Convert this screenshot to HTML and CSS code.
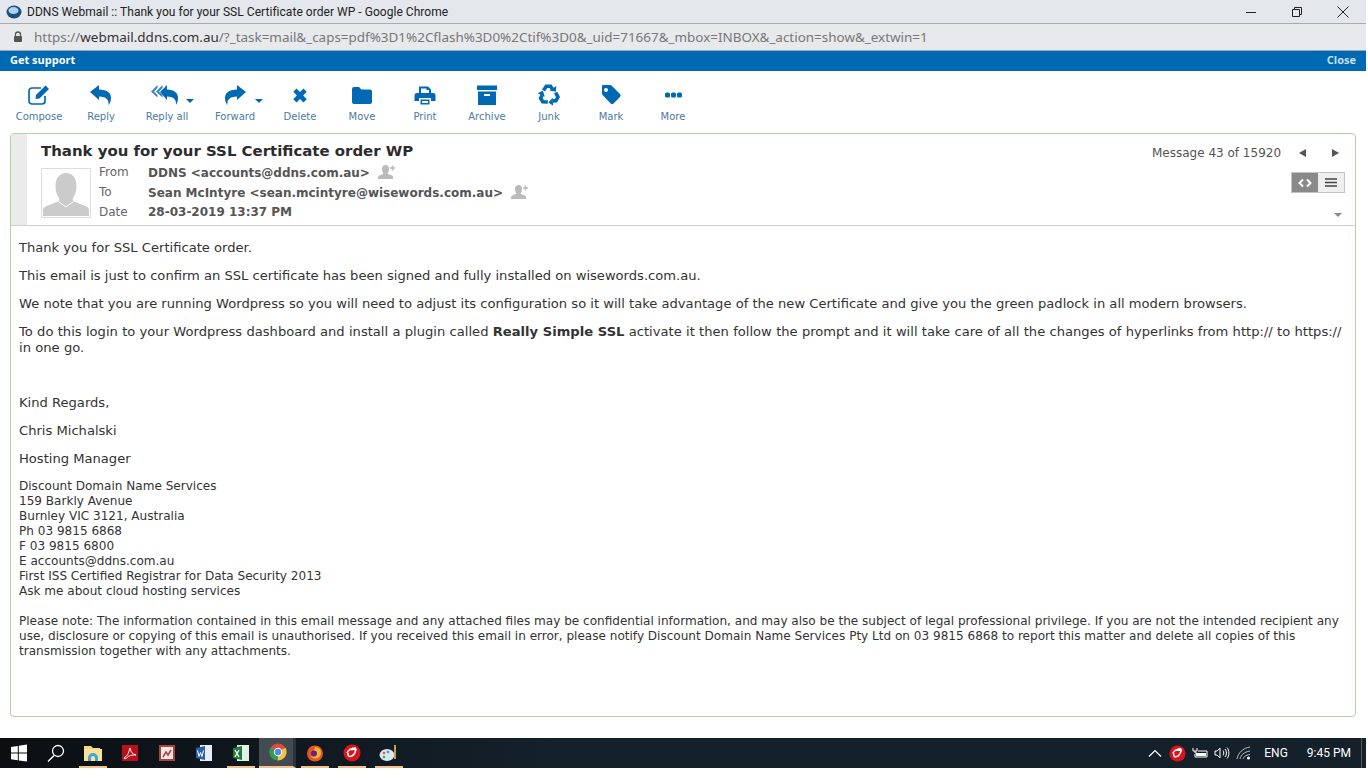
FILE: index.html
```html
<!DOCTYPE html>
<html lang="en">
<head>
  <meta charset="UTF-8">
  <title>DDNS Webmail :: Thank you for your SSL Certificate order WP</title>
  <link rel="stylesheet" href="styles.css">
</head>
<body>
<div class="screen">
  <div class="titlebar">
    <svg class="app-icon" width="16" height="16" viewBox="0 0 16 16"><ellipse cx="8" cy="8" rx="7.5" ry="6.5" fill="#1d4f7c"/><ellipse cx="7.5" cy="6.5" rx="5" ry="3.6" fill="#a9d3ee"/></svg>
    <span class="title-text">DDNS Webmail :: Thank you for your SSL Certificate order WP - Google Chrome</span>
    <div class="win-buttons">
      <svg width="12" height="12" viewBox="0 0 12 12"><path d="M1 6.500h10" stroke="#222" fill="none"/></svg>
      <svg width="12" height="12" viewBox="0 0 12 12"><path d="M1.500 3.500h7v7h-7zM3.500 3.500v-2h7v7h-2" stroke="#222" fill="none"/></svg>
      <svg width="12" height="12" viewBox="0 0 12 12"><path d="M.5.5l11 11M11.500.5l-11 11" stroke="#222" fill="none"/></svg>
    </div>
  </div>
  <div class="addressbar">
    <svg width="10" height="12" viewBox="0 0 10 12"><path d="M2.500 5V3.500a2.500 2.500 0 0 1 5 0V5" stroke="#555" stroke-width="1.300" fill="none"/><rect x="1" y="5" width="8" height="6" rx="1" fill="#555"/></svg>
    <span class="url"><span class="url-dim">https://</span>webmail.ddns.com.au<span class="url-dim">/?_task=mail&amp;_caps=pdf%3D1%2Cflash%3D0%2Ctif%3D0&amp;_uid=71667&amp;_mbox=INBOX&amp;_action=show&amp;_extwin=1</span></span>
  </div>
  <div class="supportbar"><a>Get support</a><a class="close-link">Close</a></div>

  <div class="toolbar">
    <div class="tool tool-compose"><svg width="24" height="22" viewBox="0 0 24 22"><path d="M18 12v5a3 3 0 0 1-3 3H5a3 3 0 0 1-3-3V7a3 3 0 0 1 3-3h9" fill="none" stroke="#0069b4" stroke-width="1.700"/><path d="M9 11L18.500 1.500l3.500 3.500L12.500 14.500 8.500 15z" fill="#0069b4"/></svg><span>Compose</span></div>
    <div class="tool tool-reply"><svg width="24" height="22" viewBox="0 0 24 22"><path d="M1 8L10 1v4.500c8 0 12 3.500 12 8.500 0 3-1 5-2.500 7 .6-5-2-8.500-9.500-8.500V16z" fill="#0069b4"/></svg><span>Reply</span></div>
    <div class="tool tool-replyall"><svg width="34" height="22" viewBox="0 0 34 22"><path d="M7.500 1L1 7.500 7.500 13.500V11L4 7.500 7.500 4zM12.500 1L6 7.500 12.500 13.500V11L9 7.500 12.500 4z" fill="#3d84bd"/><path d="M10 8l7-7v4.500c7 0 11 3.500 11 8.500 0 3-1 5-2 7 .4-5-2-8.500-9-8.500V16z" fill="#0069b4"/></svg><i class="caret"></i><span>Reply all</span></div>
    <div class="tool tool-forward"><svg width="24" height="22" viewBox="0 0 24 22"><path d="M23 8L14 1v4.500C6 5.500 2 9 2 14c0 3 1 5 2.500 7-.6-5 2-8.500 9.500-8.500V16z" fill="#0069b4"/></svg><i class="caret"></i><span>Forward</span></div>
    <div class="tool tool-delete"><svg width="24" height="22" viewBox="0 0 24 22"><path d="M8.500 3.500L12 7l3.500-3.500 3.200 3.200-3.500 3.800 3.500 3.800-3.200 3.200L12 14l-3.500 3.500-3.200-3.200 3.500-3.800-3.500-3.800z" fill="#0069b4" transform="translate(0 1)"/></svg><span>Delete</span></div>
    <div class="tool tool-move"><svg width="24" height="22" viewBox="0 0 24 22"><path d="M2 5a2 2 0 0 1 2-2h5l2.500 2.500H20a2 2 0 0 1 2 2V18a2 2 0 0 1-2 2H4a2 2 0 0 1-2-2z" fill="#0069b4"/></svg><span>Move</span></div>
    <div class="tool tool-print"><svg width="24" height="22" viewBox="0 0 24 22"><path d="M6 9V2.500h9l3 3V9h-2V6h-2.500V4.500H8V9z" fill="#0069b4"/><path d="M4 9h16a2.500 2.500 0 0 1 2.500 2.500V17H18v-3H6v3H1.500v-5.500A2.500 2.500 0 0 1 4 9z" fill="#0069b4"/><path d="M7.500 15.500h9v5h-9z" fill="#0069b4"/><path d="M9 17h6v2H9z" fill="#fff"/></svg><span>Print</span></div>
    <div class="tool tool-archive"><svg width="24" height="22" viewBox="0 0 24 22"><path d="M2 1.500h20V6H2z" fill="#0069b4"/><path d="M3 7.500h18V21H3z" fill="#0069b4"/><path d="M9 10h6v2H9z" fill="#fff"/></svg><span>Archive</span></div>
    <div class="tool tool-junk"><svg width="24" height="22" viewBox="0 2 24 22"><g id="recycle-arm"><path d="M6.500 8.500L9.300 4.200H13.500L15.300 7" fill="none" stroke="#0069b4" stroke-width="3.600"/><path d="M12.500 8.500L18.800 9.800 19.300 4z" fill="#0069b4"/></g><use href="#recycle-arm" transform="rotate(120 12 13)"/><use href="#recycle-arm" transform="rotate(240 12 13)"/></svg><span>Junk</span></div>
    <div class="tool tool-mark"><svg width="24" height="22" viewBox="0 0 24 22"><path d="M4 1h7a2 2 0 0 1 1.500.6l8.500 8.500a2 2 0 0 1 0 2.800l-6.500 6.500a2 2 0 0 1-2.800 0L3.600 11a2 2 0 0 1-.6-1.500V2a1 1 0 0 1 1-1zm3 3a2 2 0 1 0 0 4 2 2 0 0 0 0-4z" fill="#0069b4" fill-rule="evenodd"/></svg><span>Mark</span></div>
    <div class="tool tool-more"><svg width="24" height="22" viewBox="0 0 24 22"><rect x="4" y="8.500" width="5" height="5" rx="1.500" fill="#0069b4"/><rect x="10" y="8.500" width="5" height="5" rx="1.500" fill="#0069b4"/><rect x="16" y="8.500" width="5" height="5" rx="1.500" fill="#0069b4"/></svg><span>More</span></div>
  </div>

  <div class="message-card">
    <div class="message-header">
      <div class="gutter"></div>
      <div class="header-main">
        <h2 class="subject">Thank you for your SSL Certificate order WP</h2>
        <div class="header-row">
          <div class="avatar"><svg width="46" height="46" viewBox="0 0 46 46"><path d="M0 46v-6c0-2 1.500-3 5-4.500l10-4c1.500-.7 1.500-2 1-3.500-2-2.500-3.500-7-3.500-12 0-8 4-13 10.500-13s10.500 5 10.500 13c0 5-1.500 9.500-3.500 12-.5 1.500-.5 2.800 1 3.500l10 4c3.500 1.500 5 2.500 5 4.500v6z" fill="#cbcbcb"/><path d="M15.500 31.500L23 37l7.500-5.500" fill="none" stroke="#fff"/></svg></div>
          <table class="meta">
            <tr><td class="meta-label">From</td><td class="meta-value">DDNS &lt;accounts@ddns.com.au&gt;<svg class="add-contact" width="18" height="14" viewBox="0 0 18 14"><path d="M0 14v-2c0-1 1-1.500 3-2.300l2.500-1C5 8 4 6.500 4 4c0-2.500 1.300-4 3.500-4S11 1.500 11 4c0 2.500-1 4-1.500 4.700l2.500 1c2 .8 3 1.300 3 2.300v2z" fill="#bbb"/><path d="M12 3h5M14.500.5v5" stroke="#bbb" stroke-width="1.500"/></svg></td></tr>
            <tr><td class="meta-label">To</td><td class="meta-value">Sean McIntyre &lt;sean.mcintyre@wisewords.com.au&gt;<svg class="add-contact" width="18" height="14" viewBox="0 0 18 14"><path d="M0 14v-2c0-1 1-1.500 3-2.300l2.500-1C5 8 4 6.500 4 4c0-2.500 1.300-4 3.500-4S11 1.500 11 4c0 2.500-1 4-1.500 4.700l2.500 1c2 .8 3 1.300 3 2.300v2z" fill="#bbb"/><path d="M12 3h5M14.500.5v5" stroke="#bbb" stroke-width="1.500"/></svg></td></tr>
            <tr><td class="meta-label">Date</td><td class="meta-value">28-03-2019 13:37 PM</td></tr>
          </table>
        </div>
      </div>
      <div class="header-side">
        <div class="pager">
          <span>Message 43 of 15920</span>
          <i class="arrow-left"></i>
          <i class="arrow-right"></i>
        </div>
        <div class="view-toggle">
          <div class="view-btn view-btn-on"><svg width="14" height="10" viewBox="0 0 14 10"><path d="M5 1.500L1.500 5 5 8.500M9 1.500L12.500 5 9 8.500" fill="none" stroke="#fff" stroke-width="2"/></svg></div>
          <div class="view-btn"><svg width="12" height="9" viewBox="0 0 12 9"><path d="M0 1h12M0 4.500h12M0 8h12" stroke="#444" stroke-width="1.400"/></svg></div>
        </div>
        <i class="expand-caret"></i>
      </div>
    </div>
    <div class="message-body">
      <p>Thank you for SSL Certificate order.</p>
      <p>This email is just to confirm an SSL certificate has been signed and fully installed on wisewords.com.au.</p>
      <p>We note that you are running Wordpress so you will need to adjust its configuration so it will take advantage of the new Certificate and give you the green padlock in all modern browsers.</p>
      <p class="para-gap">To do this login to your Wordpress dashboard and install a plugin called <b>Really Simple SSL</b> activate it then follow the prompt and it will take care of all the changes of hyperlinks from http:// to https:// in one go.</p>
      <p>Kind Regards,</p>
      <p>Chris Michalski</p>
      <p>Hosting Manager</p>
      <div class="signature">
        Discount Domain Name Services<br>
        159 Barkly Avenue<br>
        Burnley VIC 3121, Australia<br>
        Ph 03 9815 6868<br>
        F 03 9815 6800<br>
        E accounts@ddns.com.au<br>
        First ISS Certified Registrar for Data Security 2013<br>
        Ask me about cloud hosting services
      </div>
      <div class="disclaimer">Please note: The information contained in this email message and any attached files may be confidential information, and may also be the subject of legal professional privilege. If you are not the intended recipient any use, disclosure or copying of this email is unauthorised. If you received this email in error, please notify Discount Domain Name Services Pty Ltd on 03 9815 6868 to report this matter and delete all copies of this transmission together with any attachments.</div>
    </div>
  </div>

  <div class="taskbar">
    <div class="task"><svg width="18" height="18" viewBox="0 0 18 18"><path d="M1 3l6.800-1v6.600H1zM8.800 1.800L17 .6v8H8.800zM1 9.600h6.800v6.600L1 15.200zM8.800 9.600H17v8l-8.200-1.200z" fill="#fff"/></svg></div>
    <div class="task"><svg width="18" height="18" viewBox="0 0 18 18"><circle cx="11" cy="7" r="5.500" fill="none" stroke="#fff" stroke-width="1.300"/><path d="M7 11.500L1 17.500" stroke="#fff" stroke-width="1.500"/></svg></div>
    <div class="task task-open"><svg width="18" height="16" viewBox="0 0 18 16"><path d="M0 1h7l2 2h7v3H0z" fill="#f4d67c"/><path d="M0 4h18v12H0z" fill="#f9e39a"/><path d="M4 16v-3a5 5 0 0 1 10 0v3h-3v-3a2 2 0 0 0-4 0v3z" fill="#3da7dc"/></svg></div>
    <div class="task"><svg width="18" height="18" viewBox="0 0 18 18"><rect width="16" height="16" x="1" y="1" fill="#b8111a"/><path d="M3 14c3-1.500 5-5 5.500-9 .1-1.500 1-1.500 1 0 0 3 2 5 5.500 6-4-.3-7 .5-9.500 3-1 1-2.500 1-2.500 0z" fill="none" stroke="#fff" stroke-width=".9"/></svg></div>
    <div class="task"><svg width="18" height="18" viewBox="0 0 18 18"><rect width="16" height="16" x="1" y="1" fill="#a8433f"/><rect width="12" height="12" x="3" y="3" fill="#f4e6e3"/><path d="M5 13l3-5 2 3 3-5" stroke="#a8433f" stroke-width="1.500" fill="none"/></svg></div>
    <div class="task"><svg width="18" height="18" viewBox="0 0 18 18"><path d="M5 1h12v16H5z" fill="#e8eef8"/><path d="M1 4l9-2v14l-9-2z" fill="#2b5fa8"/><path d="M2.500 6.500l1.500 6 1.500-4 1.500 4 1.500-6" stroke="#fff" fill="none"/></svg></div>
    <div class="task task-open"><svg width="18" height="18" viewBox="0 0 18 18"><path d="M5 1h12v16H5z" fill="#e4f0e4"/><path d="M1 4l9-2v14l-9-2z" fill="#1f7a3d"/><path d="M3 6l4 7M7 6l-4 7" stroke="#fff" stroke-width="1.300"/></svg></div>
    <div class="task task-active"><svg width="18" height="18" viewBox="0 0 18 18"><circle cx="9" cy="9" r="8.500" fill="#dd4b3e"/><path d="M9 9L16.400 4.800A8.500 8.500 0 0 1 9 17.500z" fill="#f6c445"/><path d="M9 9L9 17.500A8.500 8.500 0 0 1 1.600 4.800z" fill="#2f9e4f"/><circle cx="9" cy="9" r="4.200" fill="#fff"/><circle cx="9" cy="9" r="3.200" fill="#4a8fe0"/></svg></div>
    <div class="task task-open"><svg width="18" height="18" viewBox="0 0 18 18"><circle cx="9" cy="9.500" r="8" fill="#e6532a"/><path d="M9 3c4 0 6.500 3 6 6.500-.5 3-3 5-6 5-2 0-3.500-1-4.500-2.500 2 1 5 .5 5.500-2 .3-1.500-1-2.500-2.500-2.500C8 6 9 4 9 3z" fill="#f7b32b"/><circle cx="8" cy="9.500" r="3" fill="#5b2a86"/></svg></div>
    <div class="task task-open"><svg width="18" height="18" viewBox="0 0 18 18"><circle cx="9" cy="9" r="8.500" fill="#d8141c"/><path d="M6 5.500h7c-1 4-3 7-6 7-2 0-2.500-2-1.500-3.500M4 9c1-3 5-5 9-5" fill="none" stroke="#fff" stroke-width="1.500"/></svg></div>
    <div class="task task-open"><svg width="20" height="18" viewBox="0 0 20 18"><ellipse cx="8" cy="11" rx="7.500" ry="6" fill="#d9e6ee"/><circle cx="5" cy="9" r="1.300" fill="#e2574c"/><circle cx="9" cy="8" r="1.300" fill="#4a8fe0"/><circle cx="5" cy="13" r="1.300" fill="#3da35a"/><path d="M16 1v14" stroke="#c99b4a" stroke-width="2"/></svg></div>
    <div class="tray">
      <svg width="14" height="8" viewBox="0 0 14 8"><path d="M1 7.500l6-6 6 6" fill="none" stroke="#fff" stroke-width="1.200"/></svg>
      <svg class="tray-trend" width="17" height="17" viewBox="0 0 18 18"><circle cx="9" cy="9" r="8.500" fill="#d8141c"/><path d="M6 5.500h7c-1 4-3 7-6 7-2 0-2.500-2-1.500-3.500M4 9c1-3 5-5 9-5" fill="none" stroke="#fff" stroke-width="1.500"/></svg>
      <svg class="tray-battery" width="16" height="12" viewBox="0 0 16 12"><path d="M1 1v3h4V1M3 4v2h2M6 4h9v6H3V7" fill="none" stroke="#fff"/><path d="M4 6h10v3H4z" fill="#fff"/></svg>
      <svg class="tray-sound" width="16" height="14" viewBox="0 0 16 14"><path d="M1 5v4h2l3 3V2L3 5zM9 4.500c1 1.500 1 3.500 0 5M11 3c2 2.500 2 5.500 0 8M13 1.500c2.500 3 2.500 8 0 11" fill="none" stroke="#fff"/></svg>
      <svg class="tray-wifi" width="16" height="14" viewBox="0 0 16 14"><path d="M1 13C2 7 7 2 14 1M4 13c.7-4 4-7 10-8M7 13c.5-2 2.500-4 7-4.500" fill="none" stroke="#bbb"/><circle cx="12.500" cy="12" r="1.500" fill="#fff"/></svg>
      <span class="tray-lang">ENG</span>
      <span class="tray-clock">9:45 PM</span>
    </div>
  </div>
</div>
</body>
</html>
```
FILE: styles.css
```css
html, body {
  margin: 0;
  padding: 0;
  background: #fff;
}
.screen {
  width: 1366px;
  height: 768px;
  display: flex;
  flex-direction: column;
  overflow: hidden;
  font-family: "DejaVu Sans", Verdana, sans-serif;
  color: #333;
}

/* window chrome */
.titlebar {
  height: 23px;
  flex: none;
  display: flex;
  align-items: center;
  padding-left: 6px;
  background: #e4e7eb;
  border-bottom: 1px solid #a9abae;
  font-family: Roboto, sans-serif;
  font-size: 12px;
  letter-spacing: .04px;
  color: #222;
}
.title-text {
  margin-left: 5px;
}
.win-buttons {
  margin-left: auto;
  display: flex;
  gap: 34px;
  padding-right: 17px;
}
.addressbar {
  height: 26px;
  flex: none;
  display: flex;
  align-items: center;
  padding-left: 13px;
  background: #e7e9ed;
  border-bottom: 1px solid #9fa6ad;
  font-family: "Noto Sans", sans-serif;
  font-size: 13.450px;
  color: #333;
}
.url {
  margin-left: 11px;
}
.url-dim {
  color: #777;
}
.supportbar {
  height: 20px;
  flex: none;
  box-sizing: border-box;
  display: flex;
  justify-content: space-between;
  align-items: center;
  padding: 0 10px 3px 10px;
  background: #0069b4;
  font-family: "Open Sans", sans-serif;
  font-size: 11px;
  font-weight: 700;
  color: #fff;
}
.close-link {
  color: #c5e0f2;
}

/* toolbar */
.toolbar {
  height: 62px;
  flex: none;
  position: relative;
}
.tool {
  position: absolute;
  top: 13px;
  display: flex;
  flex-direction: column;
  align-items: center;
  width: 62px;
  font-size: 10px;
  color: #4c7aa3;
}
.tool span {
  margin-top: 5px;
}
.tool svg {
  display: block;
}
.caret {
  position: absolute;
  top: 15px;
  border: 4px solid transparent;
  border-top: 4px solid #0069b4;
  border-bottom: 0;
}
.tool-compose { left: 8px; }
.tool-reply { left: 70px; }
.tool-replyall { left: 136px; }
.tool-replyall .caret { left: 50px; }
.tool-forward { left: 204px; }
.tool-forward .caret { left: 51px; }
.tool-delete { left: 269px; }
.tool-move { left: 331px; }
.tool-print { left: 394px; }
.tool-archive { left: 456px; }
.tool-junk { left: 518px; }
.tool-mark { left: 580px; }
.tool-more { left: 642px; }

/* message card */
.message-card {
  height: 584px;
  flex: none;
  box-sizing: border-box;
  margin: 0 10px;
  border: 1px solid #b0d5a3;
  border-radius: 4px;
  overflow: hidden;
}
.message-header {
  display: flex;
  height: 91px;
  border-bottom: 1px solid #cfd2d2;
}
.gutter {
  width: 16px;
  background: #ebebeb;
  flex: none;
}
.header-main {
  padding: 8px 0 0 14px;
  flex: 1;
}
.subject {
  margin: 0;
  font-size: 14.950px;
  line-height: 19px;
  font-weight: 700;
  color: #2c2c2c;
}
.header-row {
  display: flex;
  margin-top: 5px;
}
.avatar {
  box-sizing: border-box;
  width: 50px;
  height: 50px;
  border: 1px solid #ddd;
  padding: 1px;
  margin-top: 2px;
}
.avatar svg {
  display: block;
}
.meta {
  margin: -4px 0 0 8px;
  border-collapse: collapse;
  font-size: 12px;
}
.meta td {
  padding: 0;
  height: 20px;
}
.meta-label {
  width: 49px;
  color: #666;
}
.meta-value {
  font-weight: 700;
  color: #555;
}
.add-contact {
  margin-left: 8px;
  vertical-align: -2px;
}
.header-side {
  width: 200px;
  flex: none;
  position: relative;
}
.pager {
  display: flex;
  align-items: center;
  padding: 12px 0 0 0;
  margin-left: -3px;
  font-size: 12px;
  color: #555;
}
.arrow-left {
  margin-left: 18px;
  border: 4px solid transparent;
  border-right: 7px solid #555;
  border-left: 0;
}
.arrow-right {
  margin-left: 26px;
  border: 4px solid transparent;
  border-left: 7px solid #555;
  border-right: 0;
}
.view-toggle {
  position: absolute;
  top: 38px;
  right: 10px;
  display: flex;
  border: 1px solid #c4c4c4;
}
.view-btn {
  width: 26px;
  height: 19px;
  display: flex;
  align-items: center;
  justify-content: center;
  background: #efefef;
}
.view-btn-on {
  background: #8a8a8a;
}
.expand-caret {
  position: absolute;
  top: 79px;
  right: 13px;
  border: 4px solid transparent;
  border-top: 4px solid #888;
  border-bottom: 0;
}

/* message text */
.message-body {
  padding: 14px 8px 0 8px;
  font-size: 13.100px;
  line-height: 16px;
  color: #333;
}
.message-body p {
  margin: 0 0 12px;
}
.message-body .para-gap {
  margin-bottom: 39px;
  word-spacing: .15px;
}
.signature {
  font-size: 12.050px;
  line-height: 15px;
  margin-top: 12px;
}
.disclaimer {
  font-size: 12.050px;
  line-height: 15px;
  margin-top: 15px;
}

/* taskbar */
.taskbar {
  margin-top: 21px;
  height: 30px;
  flex: none;
  display: flex;
  padding-right: 4px;
  background: linear-gradient(90deg, #0b0f12, #14202a 40%, #14202a);
}
.task {
  width: 37px;
  height: 30px;
  display: flex;
  align-items: center;
  justify-content: center;
  box-sizing: border-box;
}
.task-open {
  background: linear-gradient(#f3c08f, #f3c08f) center bottom / 28px 2px no-repeat;
}
.task-active {
  background: #434b52;
  border-bottom: 2px solid #f3c08f;
  border-right: 3px solid #2a333a;
  padding-left: 3px;
}
.tray {
  margin-left: auto;
  display: flex;
  align-items: center;
  gap: 6px;
  padding-right: 10px;
  border-right: 1px solid #555;
  font-family: Roboto, sans-serif;
  font-size: 12px;
  color: #fff;
}
.tray-trend {
  margin-left: 1px;
}
.tray-lang {
  margin-left: 6px;
}
.tray-clock {
  margin-left: 13px;
}
```
